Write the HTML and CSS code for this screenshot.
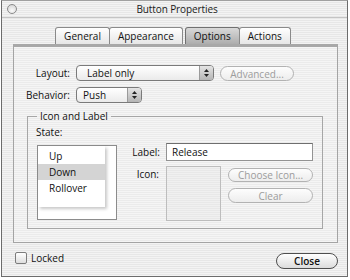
FILE: index.html
```html
<!DOCTYPE html>
<html>
<head>
<meta charset="utf-8">
<link rel="stylesheet" href="styles.css">
</head>
<body>
<div class="window">
  <div class="titlebar">
    <span class="close-dot"></span>
    <span class="title">Button Properties</span>
    <span></span>
  </div>
  <div class="content">
    <div class="tabs">
      <div class="tab">General</div>
      <div class="tab">Appearance</div>
      <div class="tab tab-active">Options</div>
      <div class="tab">Actions</div>
    </div>
    <div class="panel">
      <div class="form-row">
        <span class="lbl">Layout:</span>
        <div class="popup popup-layout">
          <span class="popup-text">Label only</span>
          <span class="popup-arrows"><svg width="13" height="14" viewBox="0 0 13 14"><path d="M4 6 L6.5 3 L9 6 Z" fill="#222"/><path d="M4 8 L6.5 11 L9 8 Z" fill="#222"/></svg></span>
        </div>
        <div class="btn btn-disabled btn-adv">Advanced...</div>
      </div>
      <div class="form-row row-2">
        <span class="lbl">Behavior:</span>
        <div class="popup popup-behavior">
          <span class="popup-text popup-text-b">Push</span>
          <span class="popup-arrows"><svg width="13" height="14" viewBox="0 0 13 14"><path d="M4 6 L6.5 3 L9 6 Z" fill="#222"/><path d="M4 8 L6.5 11 L9 8 Z" fill="#222"/></svg></span>
        </div>
      </div>
      <fieldset class="group">
        <legend>Icon and Label</legend>
        <div class="state-lbl">State:</div>
        <div class="group-body">
          <div class="list">
            <div class="list-items">
              <div class="item">Up</div>
              <div class="item item-sel">Down</div>
              <div class="item">Rollover</div>
            </div>
          </div>
          <div class="props">
            <div class="prop-row">
              <span class="plbl">Label:</span>
              <div class="field">Release</div>
            </div>
            <div class="prop-row icon-row">
              <span class="plbl plbl-icon">Icon:</span>
              <div class="well"></div>
              <div class="icon-btns">
                <div class="btn btn-disabled btn-choose">Choose Icon...</div>
                <div class="btn btn-disabled btn-clear">Clear</div>
              </div>
            </div>
          </div>
        </div>
      </fieldset>
    </div>
    <div class="footer">
      <div class="check"><span class="box"></span><span>Locked</span></div>
      <div class="btn btn-close">Close</div>
    </div>
  </div>
</div>
</body>
</html>
```
FILE: styles.css
```css
html, body {
  margin: 0;
  padding: 0;
  background: #fff;
}
body {
  font-family: "Open Sans", "DejaVu Sans", sans-serif;
  font-size: 10px;
  line-height: 14px;
  color: #111;
}
.window {
  box-sizing: border-box;
  width: 347px;
  height: 277px;
  margin-left: 1px;
  border: 1px solid #6c6c6c;
  border-top-color: #a0a0a0;
  background: repeating-linear-gradient(to bottom, #f3f3f3 0 1px, #e7e7e7 1px 2px);
}
.titlebar {
  height: 17px;
  display: grid;
  grid-template-columns: 1fr auto 1fr;
  align-items: center;
  padding-left: 5px;
  border-bottom: 1px solid #c4c4c4;
  box-sizing: border-box;
}
.close-dot {
  width: 10px;
  height: 10px;
  box-sizing: border-box;
  border: 1px solid #8a8a8a;
  border-radius: 50%;
  background: radial-gradient(circle at 50% 70%, #fafafa, #d0d0d0);
}
.title {
  color: #1a1a1a;
  letter-spacing: -0.1px;
}
.content {
  padding: 9px 9px 0 11px;
}
.tabs {
  display: flex;
  justify-content: center;
  height: 17px;
  padding-right: 4px;
}
.tab {
  box-sizing: border-box;
  height: 17px;
  padding: 1px 8px 0 8px;
  border: 1px solid #8a8a8a;
  border-bottom: none;
  border-radius: 3px 3px 0 0;
  background: linear-gradient(#ffffff, #e6e6e6);
  margin-left: -1px;
  color: #111;
}
.tab-active {
  background: linear-gradient(#d9d9d9, #adadad);
  border-color: #707070;
  margin-left: 2px;
}
.panel {
  box-sizing: border-box;
  width: 325px;
  height: 199px;
  border: 1px solid #a4a4a4;
  border-top: 3px solid #a8a8a8;
  padding-top: 18px;
  background: repeating-linear-gradient(to bottom, #f5f5f5 0 1px, #ebebeb 1px 2px);
}
.form-row {
  display: flex;
  align-items: center;
  height: 16px;
}
.row-2 {
  margin-top: 6px;
}
.lbl {
  width: 56px;
  text-align: right;
  margin-right: 6px;
}
.popup {
  box-sizing: border-box;
  height: 16px;
  display: flex;
  border: 1px solid #7a7a7a;
  border-radius: 4px;
  background: linear-gradient(#ffffff, #eaeaea);
  overflow: hidden;
}
.popup-layout { width: 138px; }
.popup-behavior { width: 66px; }
.popup-text {
  flex: 1;
  padding-left: 10px;
  line-height: 14px;
}
.popup-text-b {
  padding-left: 6px;
}
.popup-arrows {
  width: 13px;
  border-left: 1px solid #9a9a9a;
  background: linear-gradient(#e4e4e4, #b4b4b4);
  display: flex;
  align-items: center;
  justify-content: center;
}
.btn {
  box-sizing: border-box;
  display: flex;
  align-items: center;
  justify-content: center;
  border-radius: 8px;
}
.btn-disabled {
  color: #9c9c9c;
  border: 1px solid #b2b2b2;
  background: linear-gradient(#fdfdfd, #ededed);
}
.btn-adv {
  width: 74px;
  height: 15px;
  margin-left: 6px;
  margin-top: 1px;
}
.group {
  margin: 6px 14px 0 13px;
  padding: 2px 9px 7px 9px;
  border: 1px solid #a6a6a6;
  min-width: 0;
}
.group legend {
  padding: 0 3px;
  line-height: 14px;
  color: #111;
}
.state-lbl {
  margin-left: -1px;
}
.group-body {
  display: flex;
  align-items: flex-start;
  margin-top: 4px;
}
.list {
  box-sizing: border-box;
  width: 80px;
  height: 75px;
  margin-top: 2px;
  border: 1px solid #8c8c8c;
  background: #fff;
}
.list-items {
  box-sizing: border-box;
  width: 67px;
  height: 61px;
  padding-top: 2px;
  background: #fff;
  box-shadow: 2px 2px 3px rgba(0, 0, 0, 0.22);
}
.item {
  height: 16px;
  line-height: 16px;
  padding-left: 11px;
}
.item-sel {
  background: #d4d4d4;
}
.props {
  display: flex;
  flex-direction: column;
}
.prop-row {
  display: flex;
  align-items: center;
}
.icon-row {
  align-items: flex-start;
  margin-top: 5px;
}
.plbl {
  width: 43px;
  margin-right: 6px;
  text-align: right;
}
.plbl-icon {
  margin-top: 1px;
  width: 42px;
  margin-right: 7px;
}
.field {
  box-sizing: border-box;
  width: 147px;
  height: 18px;
  border: 1px solid #939393;
  border-top-color: #6e6e6e;
  background: #fff;
  padding-left: 5px;
  line-height: 16px;
}
.well {
  box-sizing: border-box;
  width: 55px;
  height: 55px;
  border: 1px solid #bdbdbd;
  background: repeating-linear-gradient(to bottom, #f0f0f0 0 1px, #e8e8e8 1px 2px);
}
.icon-btns {
  display: flex;
  flex-direction: column;
  margin-left: 7px;
  width: 85px;
}
.btn-choose {
  height: 14px;
  margin-top: 2px;
}
.btn-clear {
  height: 15px;
  margin-top: 6px;
}
.footer {
  display: flex;
  justify-content: space-between;
  align-items: flex-start;
  padding: 8px 0 0 2px;
}
.check {
  display: flex;
  align-items: center;
  gap: 4px;
  height: 14px;
}
.box {
  box-sizing: border-box;
  width: 12px;
  height: 12px;
  border: 1px solid #7c7c7c;
  border-radius: 2px;
  background: linear-gradient(#ffffff, #dedede);
}
.btn-close {
  width: 62px;
  height: 16px;
  margin-top: 2px;
  border: 1px solid #4e4e4e;
  background: linear-gradient(#ffffff, #dcdcdc);
  font-weight: 600;
  color: #111;
}
```
